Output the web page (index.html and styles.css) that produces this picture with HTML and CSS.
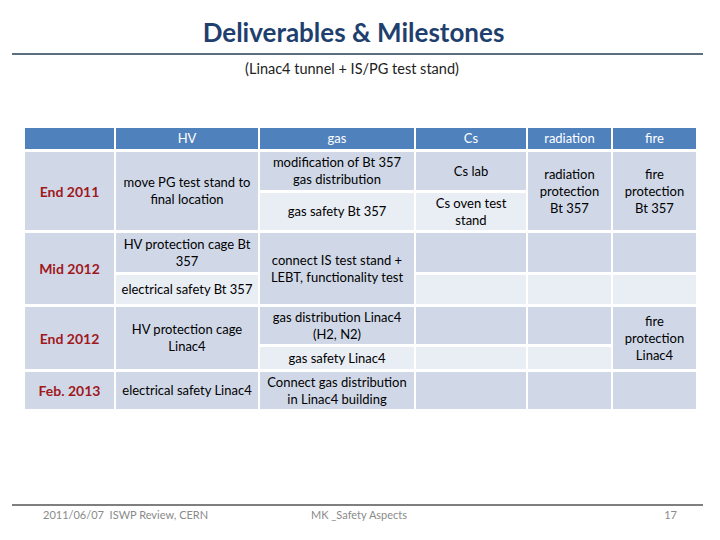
FILE: index.html
```html
<!DOCTYPE html>
<html>
<head>
<meta charset="utf-8">
<link rel="stylesheet" href="styles.css">
</head>
<body>
<div class="slide">
  <header class="head">
    <h1 class="title">Deliverables &amp; Milestones</h1>
  </header>
  <p class="subtitle">(Linac4 tunnel + IS/PG test stand)</p>

  <div class="table">
    <div class="th c1 r0"></div>
    <div class="th c2 r0">HV</div>
    <div class="th c3 r0">gas</div>
    <div class="th c4 r0">Cs</div>
    <div class="th c5 r0">radiation</div>
    <div class="th c6 r0">fire</div>

    <div class="td label dark c1 g1">End 2011</div>
    <div class="td dark c2 g1">move PG test stand to final location</div>
    <div class="td dark c3 r1">modification of Bt 357 gas distribution</div>
    <div class="td light c3 r2">gas safety Bt 357</div>
    <div class="td dark c4 r1">Cs lab</div>
    <div class="td light c4 r2">Cs oven test stand</div>
    <div class="td dark c5 g1">radiation protection Bt 357</div>
    <div class="td dark c6 g1">fire protection Bt 357</div>

    <div class="td label dark c1 g2">Mid 2012</div>
    <div class="td dark c2 r3">HV protection cage Bt 357</div>
    <div class="td light c2 r4">electrical safety Bt 357</div>
    <div class="td dark c3 g2">connect IS test stand + LEBT, functionality test</div>
    <div class="td dark c4 r3"></div>
    <div class="td light c4 r4"></div>
    <div class="td dark c5 r3"></div>
    <div class="td light c5 r4"></div>
    <div class="td dark c6 r3"></div>
    <div class="td light c6 r4"></div>

    <div class="td label dark c1 g3">End 2012</div>
    <div class="td dark c2 g3">HV protection cage Linac4</div>
    <div class="td dark c3 r5">gas distribution Linac4 (H2, N2)</div>
    <div class="td light c3 r6">gas safety Linac4</div>
    <div class="td dark c4 r5"></div>
    <div class="td light c4 r6"></div>
    <div class="td dark c5 r5"></div>
    <div class="td light c5 r6"></div>
    <div class="td dark c6 g3">fire protection Linac4</div>

    <div class="td label dark c1 r7">Feb. 2013</div>
    <div class="td dark c2 r7">electrical safety Linac4</div>
    <div class="td dark c3 r7">Connect gas distribution in Linac4 building</div>
    <div class="td dark c4 r7"></div>
    <div class="td dark c5 r7"></div>
    <div class="td dark c6 r7"></div>
  </div>

  <footer class="foot">
    <span class="f-left">2011/06/07 &nbsp;ISWP Review, CERN</span>
    <span class="f-mid">MK _Safety Aspects</span>
    <span class="f-right">17</span>
  </footer>
</div>
</body>
</html>
```

FILE: styles.css
```css
html, body {
  margin: 0;
  padding: 0;
  background: #ffffff;
}
.slide {
  width: 720px;
  height: 540px;
  font-family: Lato, "Open Sans", sans-serif;
  color: #000;
  display: flex;
  flex-direction: column;
}
.head {
  margin: 0 17px 0 12px;
  border-bottom: 2px solid #5b6f7f;
  height: 55px;
  box-sizing: border-box;
  display: flex;
  justify-content: center;
}
.title {
  margin: 17px 0 0 -8px;
  font-size: 26px;
  font-weight: bold;
  line-height: 30px;
  color: #1f3f6e;
}
.subtitle {
  margin: 5px 0 0 -16px;
  text-align: center;
  font-size: 14.5px;
  line-height: 18px;
  color: #222;
}
.table {
  margin: 50px 0 0 25px;
  width: 671px;
  display: grid;
  grid-template-columns: 89px 142px 154px 110px 83px 83px;
  grid-template-rows: 21px 38px 37px 39px 29px 37px 22px 37px;
  column-gap: 2px;
  row-gap: 3px;
}
.th, .td {
  display: flex;
  align-items: center;
  justify-content: center;
  text-align: center;
  font-size: 13px;
  line-height: 17px;
  padding: 0 5px;
}
.th {
  background: #4f81bd;
  color: #fff;
  font-size: 13px;
}
.dark { background: #d0d8e8; }
.light { background: #e9edf4; }
.label {
  color: #a0181c;
  font-weight: bold;
  font-size: 14px;
}
.c1 { grid-column: 1; }
.c2 { grid-column: 2; }
.c3 { grid-column: 3; }
.c4 { grid-column: 4; }
.c5 { grid-column: 5; }
.c6 { grid-column: 6; }
.r0 { grid-row: 1; }
.r1 { grid-row: 2; }
.r2 { grid-row: 3; }
.r3 { grid-row: 4; }
.r4 { grid-row: 5; }
.r5 { grid-row: 6; }
.r6 { grid-row: 7; }
.r7 { grid-row: 8; }
.g1 { grid-row: 2 / span 2; }
.g2 { grid-row: 4 / span 2; }
.g3 { grid-row: 6 / span 2; }

.foot {
  margin: auto 17px 0 12px;
  height: 36px;
  border-top: 2px solid #7f7f7f;
  box-sizing: border-box;
  display: grid;
  grid-template-columns: 268px 1fr auto;
  align-items: start;
  padding: 2px 26px 0 31px;
  font-size: 11px;
  line-height: 14px;
  color: #8a8a8a;
}
.f-right { text-align: right; }
```
